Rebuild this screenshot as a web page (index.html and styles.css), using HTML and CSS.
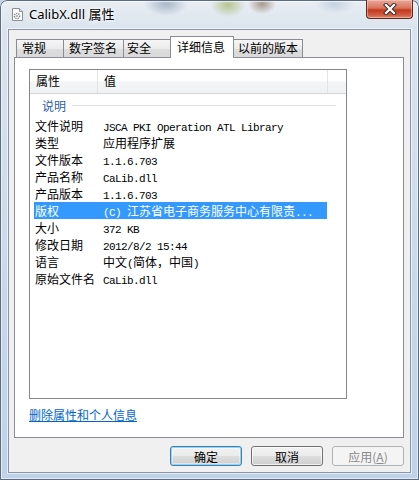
FILE: index.html
```html
<!DOCTYPE html>
<html lang="zh-CN">
<head>
  <meta charset="UTF-8" />
  <title>CalibX.dll 属性</title>
  <link rel="stylesheet" href="styles.css">
</head>
<body>

  <div class="window">
    <!-- 标题栏 -->
    <div class="titlebar">
      <svg class="app-icon" width="11" height="13" viewBox="0 0 11 13">
        <path d="M0.5 0.5h7l3 3v9h-10z" fill="#fff" stroke="#8a8f96"/>
        <path d="M7.5 0.5v3h3" fill="#e4e6ea" stroke="#8a8f96"/>
        <circle cx="5" cy="8" r="2.6" fill="none" stroke="#7b8290" stroke-width="1.4" stroke-dasharray="1.3 0.9"/>
        <circle cx="5" cy="8" r="1" fill="#9aa2ad"/>
      </svg>
      <span class="title">CalibX.dll 属性</span>
      <div class="close-btn">
        <svg width="14" height="12" viewBox="0 0 14 12">
          <path d="M3 2l8 8M11 2l-8 8" stroke="#3b3030" stroke-width="4.2" stroke-linecap="square"/>
          <path d="M3 2l8 8M11 2l-8 8" stroke="#fff" stroke-width="2.2" stroke-linecap="square"/>
        </svg>
      </div>
    </div>

    <!-- 客户区 -->
    <div class="client">
      <div class="tabs">
        <div class="tab t1">常规</div>
        <div class="tab t2">数字签名</div>
        <div class="tab t3">安全</div>
        <div class="tab t4 active">详细信息</div>
        <div class="tab t5">以前的版本</div>
      </div>

      <div class="tab-page">
        <div class="listview">
          <div class="lv-header">
            <div class="hc c1">属性</div>
            <div class="hc c2">值</div>
            <div class="hc c3"></div>
          </div>
          <div class="lv-group"><span>说明</span><i></i></div>

          <div class="row"><span class="k">文件说明</span><span class="v"><span class="mono">JSCA PKI Operation ATL Library</span></span></div>
          <div class="row"><span class="k">类型</span><span class="v">应用程序扩展</span></div>
          <div class="row"><span class="k">文件版本</span><span class="v"><span class="mono">1.1.6.703</span></span></div>
          <div class="row"><span class="k">产品名称</span><span class="v"><span class="mono">CaLib.dll</span></span></div>
          <div class="row"><span class="k">产品版本</span><span class="v"><span class="mono">1.1.6.703</span></span></div>
          <div class="row selected"><span class="k">版权</span><span class="v"><span class="mono">(C) </span>江苏省电子商务服务中心有限责<span class="mono">...</span></span></div>
          <div class="row"><span class="k">大小</span><span class="v"><span class="mono">372 KB</span></span></div>
          <div class="row"><span class="k">修改日期</span><span class="v"><span class="mono">2012/8/2 15:44</span></span></div>
          <div class="row"><span class="k">语言</span><span class="v">中文<span class="mono">(</span>简体，中国<span class="mono">)</span></span></div>
          <div class="row"><span class="k">原始文件名</span><span class="v"><span class="mono">CaLib.dll</span></span></div>
        </div>

        <a class="link" href="#">删除属性和个人信息</a>
      </div>

      <div class="buttons">
        <button class="btn default">确定</button>
        <button class="btn">取消</button>
        <button class="btn disabled">应用(<u>A</u>)</button>
      </div>
    </div>
  </div>

</body>
</html>
```

FILE: styles.css
```css
/* ===== 基础 ===== */
*{box-sizing:border-box}
body{
  margin:0;
  font-family:"Noto Sans CJK SC","Noto Sans",sans-serif;
  font-size:12px;
  color:#000;
  background:#c6d4e3;
}

/* ===== 窗口外框（玻璃效果） ===== */
.window{
  width:419px;
  height:480px;
  display:flex;
  flex-direction:column;
  border-radius:7px 7px 0 0;
  box-shadow:inset 0 0 0 1px #5d6d80, inset 0 0 0 2px rgba(255,255,255,.55);
  background:
    radial-gradient(ellipse 22px 12px at 166px 4px, rgba(120,140,165,.55), transparent),
    radial-gradient(ellipse 18px 12px at 228px 5px, rgba(150,170,80,.6), transparent),
    radial-gradient(ellipse 14px 10px at 262px 4px, rgba(120,85,50,.55), transparent),
    radial-gradient(ellipse 20px 10px at 335px 4px, rgba(150,170,200,.4), transparent),
    linear-gradient(180deg,#e9eef3 0,#dbe4ee 28px,#c9d8e8 60%,#bfd2e8 100%);
}

/* ===== 标题栏 ===== */
.titlebar{
  height:29px;
  display:flex;
  align-items:center;
  padding-left:12px;
}
.app-icon{display:block;margin-top:-1px}
.title{
  margin-left:6px;
  font-family:"Noto Sans","Noto Sans CJK SC",sans-serif;
  font-size:13px;
  color:#000;
  text-shadow:0 0 6px #fff,0 0 3px #fff;
  margin-top:-2px;
}
.close-btn{
  margin-left:auto;
  margin-right:6px;
  align-self:flex-start;
  width:47px;
  height:19px;
  border:1px solid #5b2a24;
  border-top:none;
  border-radius:0 0 4px 4px;
  background:linear-gradient(180deg,#e9a99a 0,#d9735c 45%,#c3391c 55%,#cf5f44 85%,#e18a6e 100%);
  box-shadow:inset 0 0 0 1px rgba(255,220,210,.45);
  display:flex;
  align-items:center;
  justify-content:center;
}

/* ===== 客户区 ===== */
.client{
  flex:1;
  margin:0 8px 7px;
  background:#f0f0f0;
  border:1px solid #8696a9;
  box-shadow:0 0 0 1px rgba(255,255,255,.6);
  padding-top:6px;
}

/* ===== 选项卡 ===== */
.tabs{
  display:flex;
  align-items:flex-end;
  height:21px;
  margin-left:7px;
}
.tab{
  height:18px;
  line-height:16px;
  padding-left:5px;
  border:1px solid #898c95;
  border-bottom:none;
  margin-left:-1px;
  background:linear-gradient(180deg,#f5f5f5 0,#ebebeb 50%,#dedede 51%,#d9d9d9 100%);
  white-space:nowrap;
}
.t1{width:48px;margin-left:0}
.t2{width:61px}
.t3{width:48px;padding-left:3px}
.t4{width:64px}
.t5{width:70px;padding-left:4px}
.tab.active{
  height:22px;
  margin-bottom:-1px;
  padding-left:6px;
  line-height:19px;
  background:#fff;
  position:relative;
  z-index:1;
}

/* ===== 选项卡页 ===== */
.tab-page{
  width:390px;
  height:381px;
  margin-left:5px;
  background:#fff;
  border:1px solid #898c95;
  padding:11px 0 0 14px;
}

/* ===== 列表视图 ===== */
.listview{
  width:318px;
  height:330px;
  border:1px solid #828790;
  background:#fff;
}
.lv-header{
  display:flex;
  height:24px;
  border-bottom:1px solid #d5d5d5;
  background:linear-gradient(180deg,#fff 0,#fff 45%,#f3f4f6 55%,#f1f2f4 100%);
}
.hc{
  line-height:22px;
  padding-left:6px;
  border-right:1px solid #e3e4e6;
}
.c1{width:68px}
.c2{width:230px}
.c3{flex:1;border-right:none}

.lv-group{
  display:flex;
  align-items:center;
  height:23px;
  padding:0 10px 0 12px;
}
.lv-group span{color:#2d5ca6;margin-right:6px}
.lv-group i{flex:1;height:1px;background:#e0e2e6}

.row{
  display:flex;
  width:293px;
  height:17px;
  line-height:17px;
  margin-left:4px;
  white-space:nowrap;
}
.row .k{width:69px;padding-left:1px}
.row .v{flex:1;overflow:hidden}
.row.selected{background:#3399ff;color:#fff}
.mono{
  font-family:"Liberation Mono",monospace;
  font-size:11px;
  letter-spacing:-0.6px;
}

/* ===== 链接 ===== */
.link{
  display:inline-block;
  margin-top:9px;
  line-height:14px;
  color:#0066cc;
  text-decoration:underline;
}

/* ===== 底部按钮 ===== */
.buttons{
  display:flex;
  justify-content:flex-end;
  gap:9px;
  width:395px;
  margin-top:8px;
}
.btn{
  width:72px;
  height:20px;
  padding:0;
  font-family:"Noto Sans CJK SC","Noto Sans",sans-serif;
  font-size:12px;
  line-height:17px;
  color:#000;
  border:1px solid #707070;
  border-radius:3px;
  background:linear-gradient(180deg,#f2f2f2 0,#ebebeb 50%,#dddddd 51%,#cfcfcf 100%);
  box-shadow:inset 0 0 0 1px rgba(255,255,255,.7);
}
.btn.default{
  border-color:#3c7fb1;
  box-shadow:inset 0 0 0 1px #8fd5f5,inset 0 0 0 2px rgba(255,255,255,.4);
}
.btn.disabled{
  color:#8a8a8a;
  border-color:#adb2b5;
  background:#f4f4f4;
  box-shadow:none;
}
.btn u{text-decoration:underline}
```
